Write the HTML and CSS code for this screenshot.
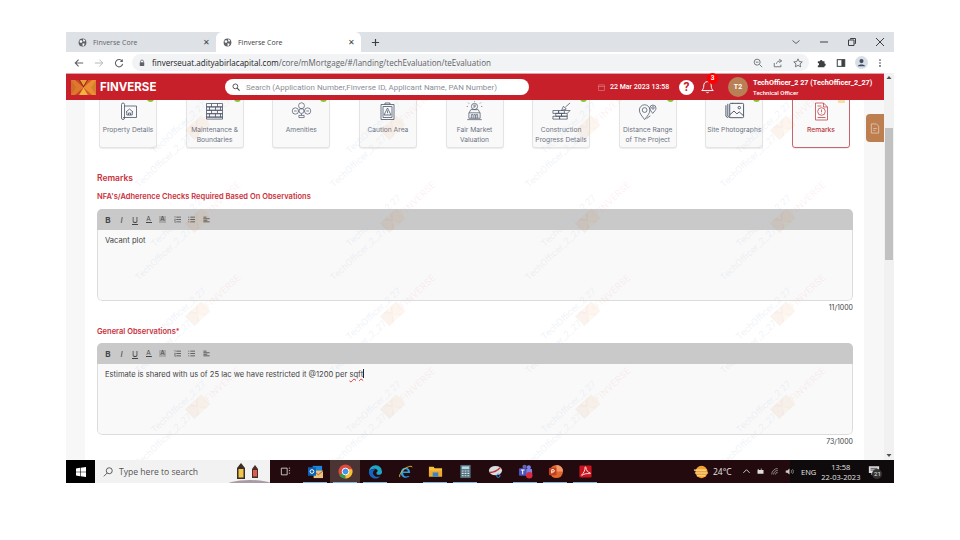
FILE: index.html
```html
<!DOCTYPE html>
<html lang="en">
<head>
<meta charset="utf-8">
<title>Finverse Core</title>
<link rel="stylesheet" href="styles.css">
</head>
<body>
<svg class="defs" width="0" height="0" aria-hidden="true">
  <defs>
    <symbol id="abg" viewBox="0 0 25 15">
      <rect width="25" height="15" fill="#8e1a22"/>
      <polygon points="0,0 8,0 12.5,7.5 8,15 0,15 5,7.5" fill="#c8452a"/>
      <polygon points="25,0 17,0 12.5,7.5 17,15 25,15 20,7.5" fill="#d9582b"/>
      <polygon points="0,0 4,0 12.5,7.5 4,15 0,15" fill="#e58a2e" opacity=".75"/>
      <polygon points="25,0 21,0 12.5,7.5 21,15 25,15" fill="#f0a336" opacity=".75"/>
      <polygon points="8,15 12.5,7.5 17,15" fill="#f4b53c"/>
      <polygon points="9,0 12.5,6 16,0" fill="#e9a033"/>
    </symbol>
    <symbol id="globe" viewBox="0 0 12 12">
      <circle cx="6" cy="6" r="5.2" fill="#5f6368"/>
      <path d="M2 3.4 5 3l1 2-2 1.5L2.4 5.5zM7 1.4 9.6 3 8.5 5l-1.6-.8zM6 7l3 .6-1.3 2.6-1.5.6z" fill="#fff"/>
    </symbol>
    <symbol id="olist" viewBox="0 0 9 9"><path d="M3 1.5h6M3 4.5h6M3 7.5h6" stroke="#444" fill="none"/><path d="M.5 .5h1v2M.5 4h1.4v1H.5v1h1.4M.5 7h1.4v1.6H.5" stroke="#444" stroke-width=".5" fill="none"/></symbol>
    <symbol id="ulist" viewBox="0 0 9 9"><path d="M3 1.5h6M3 4.5h6M3 7.5h6" stroke="#444" fill="none"/><path d="M.4 1.5h1.2M.4 4.5h1.2M.4 7.5h1.2" stroke="#444" fill="none"/></symbol>
    <symbol id="align" viewBox="0 0 9 9"><path d="M.5 1.5h4M.5 3.500h8M.5 5.500h5M.5 7.500h8" stroke="#444" fill="none"/></symbol>
  </defs>
</svg>

<div class="window">
  <div class="tabstrip">
    <div class="tab">
      <svg class="fav"><use href="#globe"/></svg><span class="tab-title">Finverse Core</span><span class="tab-x">✕</span>
    </div>
    <div class="tab tab-active">
      <svg class="fav"><use href="#globe"/></svg><span class="tab-title">Finverse Core</span><span class="tab-x">✕</span>
    </div>
    <svg class="newtab" viewBox="0 0 10 10"><path d="M5 1v8M1 5h8" stroke="#3c4043" stroke-width="1.3"/></svg>
    <div class="winctl">
      <svg viewBox="0 0 10 10"><path d="M1.500 3.500 5 6.500l3.500-3" stroke="#5f6368" fill="none"/></svg>
      <svg viewBox="0 0 10 10"><path d="M1 5h8" stroke="#3c4043"/></svg>
      <svg viewBox="0 0 10 10"><path d="M3.500 2.500V1.500h5v5h-1M1.500 3h5.500v5.500H1.500z" stroke="#3c4043" fill="none"/></svg>
      <svg viewBox="0 0 10 10"><path d="M1 1l8 8M9 1l-8 8" stroke="#3c4043"/></svg>
    </div>
  </div>

  <div class="toolbar">
    <svg class="nav" viewBox="0 0 12 12"><path d="M11 6H1.500M5.500 2 1.500 6l4 4" stroke="#5f6368" stroke-width="1.3" fill="none"/></svg>
    <svg class="nav nav-off" viewBox="0 0 12 12"><path d="M1 6h9.500M6.500 2l4 4-4 4" stroke="#b5b8bc" stroke-width="1.2" fill="none"/></svg>
    <svg class="nav" viewBox="0 0 12 12"><path d="M10 4.200A4.400 4.400 0 1 0 10.400 7" stroke="#5f6368" stroke-width="1.3" fill="none"/><path d="M10.600 1.200v3.600H7z" fill="#5f6368"/></svg>
    <div class="omnibox">
      <svg class="lock" viewBox="0 0 8 10"><path d="M2 4V3a2 2 0 0 1 4 0v1" stroke="#5f6368" fill="none"/><rect x="1" y="4" width="6" height="5" rx=".6" fill="#5f6368"/></svg>
      <span class="url"><b>finverseuat.adityabirlacapital.com</b>/core/mMortgage/#/landing/techEvaluation/teEvaluation</span>
      <span class="omni-icons">
        <svg viewBox="0 0 12 12"><circle cx="5" cy="5" r="3.600" stroke="#5f6368" fill="none"/><path d="M8 8l3 3M3.400 5h3.200" stroke="#5f6368"/></svg>
        <svg viewBox="0 0 12 12"><path d="M1.500 6v4.500h8V8M4 7c.5-2.500 2.500-3.500 5-3.500M7.500 1.500l3 2-3 2" stroke="#5f6368" fill="none"/></svg>
        <svg viewBox="0 0 12 12"><path d="m6 1 1.500 3.300 3.600.4-2.700 2.400.8 3.500L6 8.800l-3.200 1.800.8-3.500L.9 4.700l3.600-.4z" stroke="#5f6368" fill="none"/></svg>
      </span>
    </div>
    <div class="tb-right">
      <svg viewBox="0 0 12 12"><path d="M1 4h2.500a1.500 1.500 0 1 1 3 0H9v2.500a1.500 1.500 0 1 1 0 3V11H1V9a1.500 1.500 0 1 0 0-3z" fill="#3c4043"/></svg>
      <svg viewBox="0 0 12 12"><rect x="1.500" y="2" width="9" height="8" stroke="#3c4043" stroke-width="1.200" fill="none"/><rect x="6.500" y="2" width="4" height="8" fill="#3c4043"/></svg>
      <svg class="profile" viewBox="0 0 14 14"><circle cx="7" cy="7" r="7" fill="#d9dde6"/><circle cx="7" cy="5.500" r="2.200" fill="#3f4d63"/><path d="M3 11c.5-2.500 7.500-2.500 8 0z" fill="#3f4d63"/></svg>
      <svg viewBox="0 0 12 12"><circle cx="6" cy="2.500" r="1" fill="#3c4043"/><circle cx="6" cy="6" r="1" fill="#3c4043"/><circle cx="6" cy="9.500" r="1" fill="#3c4043"/></svg>
    </div>
  </div>

  <div class="viewport">
    <div class="app">
      <header class="header">
        <svg class="logo"><use href="#abg"/></svg>
        <span class="brand">FINVERSE</span>
        <div class="search">
          <svg viewBox="0 0 10 10"><circle cx="4.200" cy="4.200" r="3" stroke="#444" stroke-width="1.100" fill="none"/><path d="m6.500 6.500 3 3" stroke="#444" stroke-width="1.300"/></svg>
          <span>Search (Application Number,Finverse ID, Applicant Name, PAN Number)</span>
        </div>
        <svg class="cal" viewBox="0 0 8 8"><rect x=".5" y="1" width="7" height="6.500" stroke="#e0a0a0" stroke-width=".6" fill="none" rx=".5"/><path d="M.5 2.800h7" stroke="#e0a0a0" stroke-width=".6"/></svg>
        <span class="date">22 Mar 2023 13:58</span>
        <span class="help">?</span>
        <span class="bell">
          <svg viewBox="0 0 12 13"><path d="M6 1.500c-2.500 0-3.500 2-3.500 4 0 2.300-.8 3.300-1.800 4.300h10.600c-1-1-1.800-2-1.800-4.300 0-2-1-4-3.500-4zM4.800 11c.3 1 2.100 1 2.400 0" stroke="#fff" stroke-width=".9" fill="none"/></svg>
          <span class="badge">3</span>
        </span>
        <span class="avatar">T2</span>
        <div class="user">
          <span class="user-name">TechOfficer_2 27 (TechOfficer_2_27)</span>
          <span class="user-role">Technical Officer</span>
        </div>
      </header>

      <main class="main">
        <div class="gutter"></div>
        <div class="content">
          <div class="cards">
            <div class="card">
              <span class="dot"></span>
              <svg class="ico" viewBox="0 0 20 20"><path d="M3 17V3.500a1.500 1.500 0 0 1 3 0V17a1.500 1.500 0 0 1-3 0zM6 5h12v11.500H4.500M11 8l3.500 3-.8 0v3H8.300v-3h-.8z"/><path d="M10 14v-2h2v2"/></svg>
              <span class="label">Property Details</span>
            </div>
            <div class="card">
              <span class="dot"></span>
              <svg class="ico" viewBox="0 0 20 20"><path d="M2 2.500h16v3.400H2zM2 5.900h16v3.400H2zM2 9.300h16v3.400H2zM2 12.700h16v3.400H2zM2 16.100h16v2H2zM7 2.500v3.400M13 2.500v3.400M5 5.900v3.400M11 5.900v3.400M16 5.900v3.400M7 9.300v3.400M13 9.300v3.400M5 12.700v3.400M11 12.700v3.400M16 12.700v3.400"/></svg>
              <span class="label">Maintenance &amp;<br>Boundaries</span>
            </div>
            <div class="card">
              <span class="dot"></span>
              <svg class="ico" viewBox="0 0 24 20"><circle cx="12" cy="4" r="3.400"/><circle cx="5" cy="10" r="3.600"/><circle cx="19" cy="10" r="3.600"/><circle cx="12" cy="10" r="2.800"/><path d="M8.500 10h.7M15 10h.5M12 7.400v.6M9 17.500h6v-2.500H9zM12 13v2M3.500 10h3M17.500 10h3"/></svg>
              <span class="label">Amenities</span>
            </div>
            <div class="card">
              <svg class="ico" viewBox="0 0 20 20"><path d="M3.500 3.500h13v15h-13zM5.500 5.500h9v11h-9zM7.500 3.500V2h5v1.500M10 7l3.500 7h-7zM10 9.500v2.500M10 12.800v.5"/></svg>
              <span class="label">Caution Area</span>
            </div>
            <div class="card">
              <svg class="ico" viewBox="0 0 22 22"><circle cx="11" cy="6" r="3.400"/><path d="M9.800 4.500h2.500M9.800 5.700h2.500M10 7.800l1.800-2M4 1.800l1 1M18 1.800l-1 1M2.500 6h1.200M18.300 6h1.200M11 .4v.8M5 13l2-3.500h8l2 3.500zM4.800 13v6h12.400v-6M7.500 19v-4h2v4M12.500 19v-4h2v4M10.300 15h1.400v4M3 20.500h16"/></svg>
              <span class="label">Fair Market<br>Valuation</span>
            </div>
            <div class="card">
              <span class="dot"></span>
              <svg class="ico" viewBox="0 0 22 20"><path d="M2 9.500h6v3H2zM8 9.500h6v3H8zM5 12.500h6v3H5zM11 12.500h6v3h-6zM2 15.500h7v3H2zM9 15.500h8v3H9zM14 9.500h6l-3 3"/><path d="M11 9.500 13 5l3 3-5 1.500zM15 6l5-4.500"/></svg>
              <span class="label">Construction<br>Progress Details</span>
            </div>
            <div class="card">
              <span class="dot"></span>
              <svg class="ico" viewBox="0 0 22 20"><path d="M8 19C5 15 2.500 12.500 2.500 9a5.500 5.500 0 0 1 11 0c0 3.500-2.500 6-5.500 10z"/><circle cx="8" cy="9" r="2.500"/><path d="M16.500 12.500c-1.500-2-3-3.500-3-5.500a3.200 3.200 0 0 1 6.400 0c0 2-1.900 3.500-3.400 5.500zM10 18l4-3"/><circle cx="16.700" cy="6.800" r="1.300"/></svg>
              <span class="label">Distance Range<br>of The Project</span>
            </div>
            <div class="card">
              <span class="dot"></span>
              <svg class="ico ico-bold" viewBox="0 0 22 20"><path d="M2 4v11.500l2 1.500M4 2.500v13l2 1.500"/><rect x="6" y="2" width="14.500" height="15" rx="1"/><path d="M6 14l4.500-4 3 3 2.500-2 4.500 4M9 2v-.5M15 2v-.5"/><circle cx="16" cy="6.500" r="1.300"/></svg>
              <span class="label">Site Photographs</span>
            </div>
            <div class="card card-active">
              <span class="flag"></span>
              <svg class="ico ico-red" viewBox="0 0 20 20"><path d="M4 2h8l4 4v13H4zM12 2v4h4M6 5h4M6 16.500h8"/><circle cx="10" cy="10.500" r="3.800"/><path d="M10 8.500v2.500M10 11.800v.7"/></svg>
              <span class="label">Remarks</span>
            </div>
          </div>

          <h2 class="section-title">Remarks</h2>

          <label class="field-label">NFA's/Adherence Checks Required Based On Observations</label>
          <div class="editor">
            <div class="ed-tools">
              <b>B</b><i>I</i><u>U</u><span class="t-a">A</span><span class="t-h">A</span>
              <svg><use href="#olist"/></svg><svg><use href="#ulist"/></svg><svg><use href="#align"/></svg>
            </div>
            <div class="ed-body">Vacant plot</div>
          </div>
          <div class="counter">11/1000</div>

          <label class="field-label field-label-gen">General Observations<span class="req">*</span></label>
          <div class="editor">
            <div class="ed-tools">
              <b>B</b><i>I</i><u>U</u><span class="t-a">A</span><span class="t-h">A</span>
              <svg><use href="#olist"/></svg><svg><use href="#ulist"/></svg><svg><use href="#align"/></svg>
            </div>
            <div class="ed-body">Estimate is shared with us of 25 lac we have restricted it @1200 per <span class="spell">sqft</span><span class="caret"></span></div>
          </div>
          <div class="counter">73/1000</div>
        </div>
        <div class="gutter gutter-r">
          <span class="sidetab">
            <svg viewBox="0 0 10 12"><path d="M1 1h5.500L9 3.500V11H1z" stroke="#e9d3c0" stroke-width=".8" fill="none"/><path d="M3 6h4M3 8h2.500" stroke="#e9d3c0" stroke-width=".7"/></svg>
          </span>
        </div>

        <div class="watermarks" aria-hidden="true">
          <div class="wm-cell"><div class="wm"><span>TechOfficer_2 27</span><span class="wm-row">TechOfficer_2_27<svg><use href="#abg"/></svg><em>FINVERSE</em></span></div></div>
          <div class="wm-cell"><div class="wm"><span>TechOfficer_2 27</span><span class="wm-row">TechOfficer_2_27<svg><use href="#abg"/></svg><em>FINVERSE</em></span></div></div>
          <div class="wm-cell"><div class="wm"><span>TechOfficer_2 27</span><span class="wm-row">TechOfficer_2_27<svg><use href="#abg"/></svg><em>FINVERSE</em></span></div></div>
          <div class="wm-cell"><div class="wm"><span>TechOfficer_2 27</span><span class="wm-row">TechOfficer_2_27<svg><use href="#abg"/></svg><em>FINVERSE</em></span></div></div>
          <div class="wm-cell"><div class="wm"><span>TechOfficer_2 27</span><span class="wm-row">TechOfficer_2_27<svg><use href="#abg"/></svg><em>FINVERSE</em></span></div></div>
          <div class="wm-cell"><div class="wm"><span>TechOfficer_2 27</span><span class="wm-row">TechOfficer_2_27<svg><use href="#abg"/></svg><em>FINVERSE</em></span></div></div>
          <div class="wm-cell"><div class="wm"><span>TechOfficer_2 27</span><span class="wm-row">TechOfficer_2_27<svg><use href="#abg"/></svg><em>FINVERSE</em></span></div></div>
          <div class="wm-cell"><div class="wm"><span>TechOfficer_2 27</span><span class="wm-row">TechOfficer_2_27<svg><use href="#abg"/></svg><em>FINVERSE</em></span></div></div>
          <div class="wm-cell"><div class="wm"><span>TechOfficer_2 27</span><span class="wm-row">TechOfficer_2_27<svg><use href="#abg"/></svg><em>FINVERSE</em></span></div></div>
          <div class="wm-cell"><div class="wm"><span>TechOfficer_2 27</span><span class="wm-row">TechOfficer_2_27<svg><use href="#abg"/></svg><em>FINVERSE</em></span></div></div>
          <div class="wm-cell"><div class="wm"><span>TechOfficer_2 27</span><span class="wm-row">TechOfficer_2_27<svg><use href="#abg"/></svg><em>FINVERSE</em></span></div></div>
          <div class="wm-cell"><div class="wm"><span>TechOfficer_2 27</span><span class="wm-row">TechOfficer_2_27<svg><use href="#abg"/></svg><em>FINVERSE</em></span></div></div>
          <div class="wm-cell"><div class="wm"><span>TechOfficer_2 27</span><span class="wm-row">TechOfficer_2_27<svg><use href="#abg"/></svg><em>FINVERSE</em></span></div></div>
          <div class="wm-cell"><div class="wm"><span>TechOfficer_2 27</span><span class="wm-row">TechOfficer_2_27<svg><use href="#abg"/></svg><em>FINVERSE</em></span></div></div>
          <div class="wm-cell"><div class="wm"><span>TechOfficer_2 27</span><span class="wm-row">TechOfficer_2_27<svg><use href="#abg"/></svg><em>FINVERSE</em></span></div></div>
          <div class="wm-cell"><div class="wm"><span>TechOfficer_2 27</span><span class="wm-row">TechOfficer_2_27<svg><use href="#abg"/></svg><em>FINVERSE</em></span></div></div>
          <div class="wm-cell"><div class="wm"><span>TechOfficer_2 27</span><span class="wm-row">TechOfficer_2_27<svg><use href="#abg"/></svg><em>FINVERSE</em></span></div></div>
          <div class="wm-cell"><div class="wm"><span>TechOfficer_2 27</span><span class="wm-row">TechOfficer_2_27<svg><use href="#abg"/></svg><em>FINVERSE</em></span></div></div>
          <div class="wm-cell"><div class="wm"><span>TechOfficer_2 27</span><span class="wm-row">TechOfficer_2_27<svg><use href="#abg"/></svg><em>FINVERSE</em></span></div></div>
          <div class="wm-cell"><div class="wm"><span>TechOfficer_2 27</span><span class="wm-row">TechOfficer_2_27<svg><use href="#abg"/></svg><em>FINVERSE</em></span></div></div>
          <div class="wm-cell"><div class="wm"><span>TechOfficer_2 27</span><span class="wm-row">TechOfficer_2_27<svg><use href="#abg"/></svg><em>FINVERSE</em></span></div></div>
          <div class="wm-cell"><div class="wm"><span>TechOfficer_2 27</span><span class="wm-row">TechOfficer_2_27<svg><use href="#abg"/></svg><em>FINVERSE</em></span></div></div>
          <div class="wm-cell"><div class="wm"><span>TechOfficer_2 27</span><span class="wm-row">TechOfficer_2_27<svg><use href="#abg"/></svg><em>FINVERSE</em></span></div></div>
          <div class="wm-cell"><div class="wm"><span>TechOfficer_2 27</span><span class="wm-row">TechOfficer_2_27<svg><use href="#abg"/></svg><em>FINVERSE</em></span></div></div>
        </div>
      </main>
    </div>
    <div class="scrollbar">
      <svg viewBox="0 0 10 10"><path d="M5 3 2.500 6h5z" fill="#505050"/></svg>
      <div class="sb-track"><div class="sb-thumb"></div></div>
      <svg viewBox="0 0 10 10"><path d="M5 7 2.500 4h5z" fill="#505050"/></svg>
    </div>
  </div>

  <footer class="taskbar">
    <div class="start">
      <svg viewBox="0 0 12 12"><path d="M0 1.700 5 1v4.600H0zM5.700.9 12 0v5.600H5.700zM0 6.300h5V11l-5-.7zM5.700 6.300H12V12l-6.300-.9z" fill="#fff"/></svg>
    </div>
    <div class="tsearch">
      <svg class="tsearch-ico" viewBox="0 0 12 12"><circle cx="7.500" cy="4.500" r="3.600" stroke="#444" fill="none"/><path d="M5 7.200 1 11.200" stroke="#444"/></svg>
      <span class="tsearch-text">Type here to search</span>
      <svg class="lanterns" viewBox="0 0 50 23">
        <ellipse cx="30" cy="27" rx="26" ry="7" fill="#a99aa6"/>
        <path d="M17 8 21 3l4 5v11h-8z" fill="#3a2c28"/><rect x="18.500" y="9" width="5" height="8.500" fill="#f1c64a"/>
        <path d="M32 9 35 5l3 4v9h-6z" fill="#4a2c28"/><rect x="33" y="10" width="4" height="6.500" fill="#d9604e"/>
      </svg>
    </div>
    <div class="tasks">
      <span class="task"><svg viewBox="-3 -3 18 18"><path d="M1 2h7v8H1zM10 2h1.500M10 5h1.500M10 8h1.500" stroke="#ddd" fill="none"/></svg></span>
      <span class="task task-on"><svg viewBox="0 0 16 16"><rect x="5" y="2" width="10" height="8" fill="#1e88d8"/><rect x="6" y="7" width="10" height="8" fill="#f0c080"/><path d="m6 7.500 5 4 5-4" stroke="#a06a30" fill="none"/><rect y="3.500" width="8.500" height="9" fill="#0c62b5"/><circle cx="4.200" cy="8" r="2" fill="none" stroke="#fff"/></svg></span>
      <span class="task task-on task-active"><svg viewBox="0 0 16 16"><circle cx="8" cy="8" r="7.500" fill="#de4b3a"/><path d="M8 8 1.500 12A7.500 7.500 0 0 0 8 15.500z" fill="#2f9e4f"/><path d="M8 15.500A7.500 7.500 0 0 0 15 5.500H8z" fill="#f5c330"/><circle cx="8" cy="8" r="3.600" fill="#4a8ef0" stroke="#fff"/></svg></span>
      <span class="task task-on"><svg viewBox="0 0 16 16"><path d="M1 8a7 7 0 0 1 14 .5c0 2-1.500 3-3.500 3-1.500 0-2.500-.5-2.500-1.500 0-2 2-1.500 1-3.500C9 4.500 3.500 4 1 8z" fill="#1ea7c9"/><path d="M1 8c-.5 4 3 7.500 7 7.500 2 0 4-1 5-2.500-3 1.500-6 .5-7-1.500S5 7 8 6C5 5 1.500 5.500 1 8z" fill="#1565c0"/></svg></span>
      <span class="task"><svg viewBox="0 0 16 16"><path d="M3 9.500h10C13 6 11 4 8 4S3 6 3 9.500zM5.500 8h5C10.500 6.500 9.500 5.500 8 5.500S5.500 6.500 5.500 8z" fill-rule="evenodd" fill="#2a9fe0"/><path d="M3 9.500c0 5 6 6.500 9.500 3.500h-3C7.500 14 5.500 12 5.500 9.500z" fill="#2a9fe0"/><path d="M2 14c-1.500-2 3-9 9-11 2-.7 4-1 4 .5" stroke="#f1c232" fill="none"/></svg></span>
      <span class="task task-on"><svg viewBox="0 0 16 16"><path d="M1 3h5l1 1.500h8V13H1z" fill="#f5c33b"/><rect x="1" y="7" width="14" height="6.500" fill="#f0a92f"/><rect x="5" y="9" width="6" height="4.500" fill="#3a83c5"/></svg></span>
      <span class="task task-on"><svg viewBox="0 0 16 16"><rect x="2.500" y="1" width="11" height="14" fill="#50707e"/><rect x="4" y="2.500" width="8" height="3" fill="#b8d8e4"/><path d="M4 7.500h2M7 7.500h2M10 7.500h2M4 10h2M7 10h2M10 10h2M4 12.500h2M7 12.500h2M10 12.500h2" stroke="#dfe8ec" stroke-width="1.200"/></svg></span>
      <span class="task"><svg viewBox="0 0 16 16"><ellipse cx="8" cy="7" rx="7" ry="5" fill="#d8dde2"/><path d="M2 9c3 0 7-1 11-5" stroke="#c62f2f" stroke-width="1.500" fill="none"/><circle cx="11" cy="12.500" r="1.800" fill="none" stroke="#3a8ed8"/></svg></span>
      <span class="task task-on"><svg viewBox="0 0 16 16"><circle cx="11.500" cy="3.500" r="2.200" fill="#7b83eb"/><rect x="7" y="5" width="8" height="7" rx="1.500" fill="#7b83eb"/><circle cx="7" cy="3" r="2.300" fill="#6264a7"/><rect x="1" y="4.500" width="8" height="8" rx="1" fill="#4b53bc"/><path d="M3 6.500h4M5 6.500V11" stroke="#fff" stroke-width="1.100"/><circle cx="12" cy="12" r="3.500" fill="#d92a3d"/></svg></span>
      <span class="task task-on"><svg viewBox="0 0 16 16"><circle cx="9" cy="8" r="7" fill="#e2672f"/><path d="M9 1a7 7 0 0 1 7 7H9z" fill="#f39a6d"/><rect x="1" y="4" width="8" height="8" rx="1" fill="#c43e1c"/><path d="M4 10V6h1.500a1.200 1.200 0 0 1 0 2.500H4" stroke="#fff" fill="none"/></svg></span>
      <span class="task task-on"><svg viewBox="0 0 16 16"><rect x="1.500" y="1.500" width="13" height="13" rx="1.500" fill="#c8141c"/><path d="M3.500 12C6 10 8 6 7.500 3.500 7.300 2.800 8.500 2.800 8.500 4c0 2.500 2 5 4.500 5.500.8.200.3 1-1 .8C9 10 6 10.500 3.800 12.500" stroke="#fff" stroke-width=".9" fill="none"/></svg></span>
    </div>
    <div class="tray">
      <svg class="weather" viewBox="0 0 18 14"><circle cx="9" cy="7" r="6.500" fill="#f2a02e"/><path d="M1 5h13M2 8h14M4 11h9" stroke="#f7e0a5" stroke-width="1.200"/></svg>
      <span class="temp">24°C</span>
      <svg class="tray-i" viewBox="0 0 10 10"><path d="M1.500 6.500 5 3l3.500 3.500" stroke="#ddd" fill="none"/></svg>
      <svg class="tray-i" viewBox="0 0 12 10"><path d="M2 3h8v5H2z" fill="#ddd"/><path d="M3 1.500v1.500M7 1v2" stroke="#ddd"/></svg>
      <svg class="tray-i" viewBox="0 0 12 10"><path d="M1 9a8 8 0 0 1 8-8M3.500 9A5.500 5.500 0 0 1 9 3.500M6 9a3 3 0 0 1 3-3" stroke="#aaa" fill="none"/></svg>
      <svg class="tray-i" viewBox="0 0 12 10"><path d="M1 3.500h2L6 1v8L3 6.500H1z" fill="#ccc"/><path d="M8 3c1 1 1 3 0 4M10 2c1.500 1.500 1.500 4.500 0 6" stroke="#aaa" fill="none"/></svg>
      <span class="lang">ENG</span>
      <div class="clock"><span>13:58</span><span>22-03-2023</span></div>
      <span class="notif">
        <svg viewBox="0 0 14 12"><path d="M1 1h12v8H6l-2 2.500V9H1z" fill="#ddd"/><path d="M3 3.500h8M3 5.500h8" stroke="#222" stroke-width=".8"/></svg>
        <span class="notif-n">21</span>
      </span>
    </div>
  </footer>
</div>
</body>
</html>
```

FILE: styles.css
```css
* { box-sizing: border-box; }
html, body { margin: 0; padding: 0; background: #fff; }
body { width: 960px; height: 540px; overflow: hidden; font-family: "Roboto", "Liberation Sans", sans-serif; }
.defs { position: absolute; }
svg { display: block; }

.window { width: 828px; height: 451px; margin: 32px 0 0 66px; display: flex; flex-direction: column; background: #fff; }

/* tab strip */
.tabstrip { height: 20px; flex: none; background: #dee1e6; display: flex; align-items: stretch; padding-left: 5px; }
.tab { width: 145px; display: flex; align-items: center; padding: 0 6px 0 7px; font-family: "Open Sans", sans-serif; font-size: 7px; color: #5f6368; }
.tab-active { background: #fff; border-radius: 6px 6px 0 0; color: #3c4043; }
.fav { width: 9px; height: 9px; margin-right: 6px; flex: none; }
.tab-title { flex: 1; }
.tab-x { font-size: 7.5px; color: #3c4043; }
.newtab { width: 9px; height: 9px; align-self: center; margin-left: 10px; }
.winctl { margin-left: auto; display: flex; align-items: center; gap: 18px; padding-right: 9px; }
.winctl svg { width: 10px; height: 10px; }

/* toolbar */
.toolbar { height: 21px; flex: none; background: #fff; display: flex; align-items: center; padding-left: 8px; }
.nav { width: 10px; height: 10px; margin-right: 10px; flex: none; }
.omnibox { width: 677px; height: 17px; margin-left: -2px; background: #f1f3f4; border-radius: 9px; display: flex; align-items: center; padding: 0 6px 0 7px; }
.lock { width: 6px; height: 8px; flex: none; margin-right: 7px; }
.url { font-family: "Open Sans", sans-serif; font-size: 8.05px; color: #5f6368; white-space: nowrap; }
.url b { font-weight: 400; color: #202124; }
.omni-icons { margin-left: auto; display: flex; gap: 10px; }
.omni-icons svg { width: 10px; height: 10px; }
.tb-right { display: flex; align-items: center; gap: 9px; margin-left: 8px; }
.tb-right svg { width: 10px; height: 10px; }
.tb-right .profile { width: 13px; height: 13px; margin-right: -2px; }

.viewport { flex: 1; min-height: 0; display: flex; }
.app { flex: 1; min-width: 0; display: flex; flex-direction: column; }

/* app header */
.header { height: 27px; flex: none; background: #c8202b; border-top: 1px solid #e8a0a4; display: flex; align-items: center; padding-left: 5px; color: #fff; position: relative; z-index: 2; }
.logo { width: 25px; height: 15px; flex: none; }
.brand { font-family: "Inter", sans-serif; font-weight: 700; font-size: 11.5px; margin-left: 4px; width: 125px; flex: none; }
.search { width: 304px; height: 16px; background: #fff; border-radius: 8px; display: flex; align-items: center; padding-left: 7px; flex: none; font-size: 7.95px; color: #8b8f96; white-space: nowrap; }
.search svg { width: 8px; height: 8px; margin-right: 6px; flex: none; }
.cal { width: 7px; height: 7px; margin-left: 69px; flex: none; }
.date { font-size: 7px; font-weight: 500; margin-left: 5px; white-space: nowrap; width: 58px; flex: none; }
.help { width: 15px; height: 15px; border-radius: 50%; background: #fff; color: #c8202b; font-weight: 700; font-size: 12px; line-height: 15px; text-align: center; margin-left: 11px; flex: none; }
.bell { width: 13px; height: 14px; margin-left: 7px; position: relative; flex: none; }
.bell svg { width: 13px; height: 14px; }
.badge { position: absolute; left: 6px; top: -7px; width: 11px; height: 11px; background: #f00; border-radius: 50%; font-size: 6.5px; font-weight: 700; line-height: 11px; text-align: center; }
.avatar { width: 20px; height: 20px; border-radius: 50%; background: #b97f55; font-size: 7px; font-weight: 700; line-height: 20px; text-align: center; margin-left: 14px; flex: none; }
.user { margin-left: 5px; display: flex; flex-direction: column; gap: 2px; white-space: nowrap; }
.user-name { font-size: 7.25px; font-weight: 700; }
.user-role { font-size: 6px; font-weight: 500; }

/* main */
.main { flex: 1; min-height: 0; display: flex; overflow: hidden; position: relative; background: #fff; }
.gutter { width: 19px; flex: none; background: #f7f7f7; }
.gutter-r { width: 20px; position: relative; }
.sidetab { position: absolute; right: 0; top: 14px; width: 18px; height: 28px; background: #bd7f4f; border-radius: 4px 0 0 4px; display: flex; align-items: center; justify-content: center; }
.sidetab svg { width: 10px; height: 11px; }
.content { flex: 1; min-width: 0; padding: 0 11px 0 12px; margin-top: -8px; font-family: "Inter", "Roboto", sans-serif; }

.cards { display: flex; justify-content: space-between; padding: 0 3px 0 2px; }
.card { width: 58px; height: 56px; background: #f9f9f9; border: 1px solid #e4e4e4; border-radius: 3px; box-shadow: 0 1px 1px #ececec; position: relative; display: flex; flex-direction: column; align-items: center; padding-top: 8px; font-size: 6.7px; line-height: 10px; color: #6d7482; text-align: center; }
.card-active { border-color: #c9656a; background: #fafafa; color: #b8383f; font-weight: 500; }
.dot { position: absolute; right: 2px; top: 1.5px; width: 7px; height: 7px; border-radius: 50%; background: #7ec82e; }
.flag { position: absolute; right: 4px; top: 7px; width: 7px; height: 3px; background: #f5dfa8; }
.ico { width: 21px; height: 20px; fill: none; stroke: #4a5468; stroke-width: .8; flex: none; margin-bottom: 4px; }
.ico-bold { stroke-width: 1; }
.ico-red { stroke: #c0444a; }
.label { white-space: nowrap; }

.section-title { margin: 24px 0 0; font-size: 8.5px; line-height: 12px; font-weight: 600; color: #c9303a; }
.field-label { display: block; margin: 8px 0 7px; font-size: 7.5px; line-height: 10px; font-weight: 600; color: #c9303a; }
.field-label-gen { margin: 14px 0 6px; }
.req { font-size: 7px; }

.editor { border-radius: 5px; overflow: hidden; }
.ed-tools { height: 21px; background: #c9c9c9; display: flex; align-items: center; padding-left: 8px; gap: 7.5px; font-size: 8px; color: #444; }
.ed-tools b, .ed-tools i, .ed-tools u, .ed-tools span { width: 6px; text-align: center; line-height: 1; }
.ed-tools svg { width: 7px; height: 7px; }
.ed-tools .t-a { border-bottom: 1px solid #444; font-size: 6.5px; }
.ed-tools .t-h { background: #aaa; width: 7px; font-size: 6.5px; }
.ed-body { height: 71px; background: #f9f9f9; border: 1px solid #dcdcdc; border-top: 0; border-radius: 0 0 5px 5px; padding: 5px 7px; font-size: 7.6px; line-height: 11px; color: #444; }
.spell { text-decoration: underline wavy #d33; text-decoration-thickness: .5px; }
.caret { display: inline-block; width: 1px; height: 9px; background: #223; vertical-align: -1px; }
.counter { height: 10px; margin-top: 2px; font-size: 7px; line-height: 10px; text-align: right; color: #444; }

/* watermark */
.watermarks { position: absolute; left: 19px; top: -107px; display: grid; grid-template-columns: repeat(4, 195px); grid-auto-rows: 93px; pointer-events: none; z-index: 1; font-family: "Roboto", sans-serif; }
.wm-cell { display: flex; align-items: center; justify-content: center; }
.wm { transform: rotate(-43deg); flex: none; width: 142px; display: flex; flex-direction: column; align-items: center; font-size: 9.5px; line-height: 13px; color: rgba(190, 205, 225, .24); white-space: nowrap; }
.wm-row { display: flex; align-items: center; width: 142px; justify-content: center; }
.wm-row svg { width: 22px; height: 14px; opacity: .08; flex: none; }
.wm-row em { font-style: normal; color: rgba(235, 150, 150, .14); letter-spacing: .3px; }

/* scrollbar */
.scrollbar { width: 10px; flex: none; background: #f1f1f1; display: flex; flex-direction: column; }
.scrollbar svg { width: 10px; height: 10px; flex: none; }
.sb-track { flex: 1; padding-top: 45px; }
.sb-thumb { height: 132px; margin: 0 1px; background: #c1c1c1; }

/* taskbar */
.taskbar { height: 23px; flex: none; background: #230a0e; display: flex; align-items: stretch; color: #e6e6e6; }
.start { width: 29px; background: #000; display: flex; align-items: center; justify-content: center; flex: none; }
.start svg { width: 10px; height: 10px; }
.tsearch { width: 175px; background: #f2f2f2; display: flex; align-items: center; padding-left: 8px; flex: none; position: relative; overflow: hidden; }
.tsearch-ico { width: 10px; height: 10px; flex: none; }
.tsearch-text { font-family: "Open Sans", sans-serif; font-size: 8.6px; color: #555; margin-left: 6px; white-space: nowrap; }
.lanterns { width: 50px; height: 23px; margin-left: auto; flex: none; }
.tasks { display: flex; flex: none; }
.task { width: 30px; display: flex; align-items: center; justify-content: center; flex: none; position: relative; }
.task svg { width: 15px; height: 15px; }
.task-active { background: #4a3434; }
.task-on::after { content: ""; position: absolute; left: 3px; right: 3px; bottom: 0; height: 1.5px; background: #7fb8e6; }
.tray { flex: 1; display: flex; align-items: center; padding-left: 2px; min-width: 0; background: linear-gradient(90deg, #230a0e 0, #230a0e 64.6%, #0f0a0c 64.6%); }
.weather { width: 17px; height: 14px; margin-left: 91px; flex: none; }
.temp { font-family: "Open Sans", sans-serif; font-size: 8.5px; margin-left: 3px; width: 23px; flex: none; }
.tray-i { width: 9px; height: 9px; margin-left: 5.5px; flex: none; }
.lang { font-family: "Open Sans", sans-serif; font-size: 7.5px; margin-left: 7px; flex: none; }
.clock { display: flex; flex-direction: column; align-items: center; font-family: "Open Sans", sans-serif; font-size: 7.5px; line-height: 10px; margin-left: 5px; flex: none; }
.notif { width: 14px; height: 13px; margin-left: 8px; position: relative; flex: none; }
.notif svg { width: 12px; height: 11px; }
.notif-n { position: absolute; left: 4px; top: 4px; width: 10px; height: 10px; border-radius: 50%; background: #333; font-size: 6px; line-height: 10px; text-align: center; }
```
